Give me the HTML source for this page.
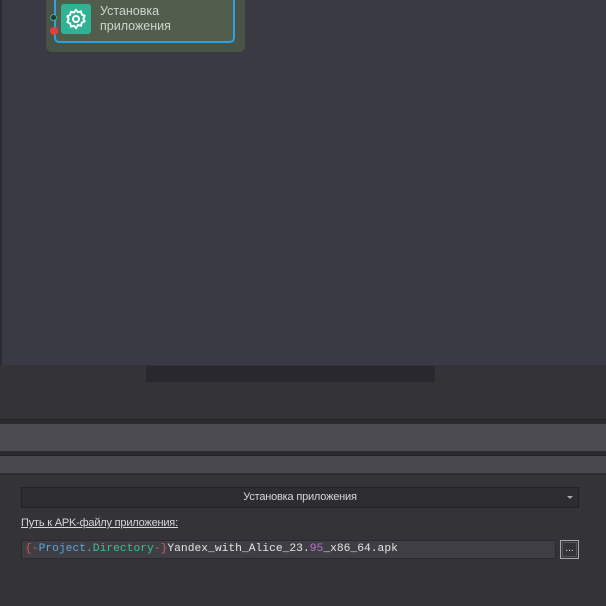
<!DOCTYPE html><html><head><style>
body{margin:0;width:606px;height:606px;overflow:hidden;background:#3a3a45;font-family:"Liberation Sans","Noto Sans CJK SC",sans-serif;position:relative}
div{position:absolute;box-sizing:border-box}
</style></head><body>
<div style="left:0;top:0;width:2px;height:606px;background:#2a2a30"></div>
<div style="left:46px;top:-10px;width:199px;height:62px;background:#4a5446;border-radius:6px"></div>
<div style="left:54px;top:-10px;width:181px;height:53px;border:2px solid #2aa3e6;border-radius:5px;background:#515e4e"></div>
<div style="left:61px;top:4px;width:30px;height:30px;background:#2fb394;border-radius:3px"></div>
<svg style="position:absolute;left:64px;top:7px" width="24" height="24" viewBox="0 0 24 24"><path d="M12 3l2 2.2 3-.7.8 3 2.8 1.4-1.2 2.8 1.2 2.6-2.8 1.4-.8 3-3-.7L12 21l-2-2.2-3 .7-.8-3-2.8-1.4L4.6 12 3.4 9.2 6.2 7.8 7 4.8l3 .7z" fill="none" stroke="#fff" stroke-width="2"/><circle cx="12" cy="12" r="3" fill="none" stroke="#fff" stroke-width="2"/></svg>
<div style="left:50px;top:14px;width:7px;height:7px;border-radius:50%;background:#1d3a2c;border:1.5px solid #2fb394"></div>
<div style="left:50px;top:27px;width:8px;height:8px;border-radius:50%;background:#e04040"></div>
<div style="left:100px;top:4px;color:#d0d4cc;font-size:12.5px;line-height:15px">Установка<br>приложения</div>
<div style="left:0;top:365px;width:606px;height:241px;background:#333338"></div>
<div style="left:146px;top:366px;width:289px;height:16px;background:#29282e"></div>
<div style="left:0;top:419px;width:606px;height:5px;background:#2a2a2f;border-top:1px solid #222226"></div>
<div style="left:0;top:424px;width:606px;height:27px;background:#4c4b51"></div>
<div style="left:0;top:451px;width:606px;height:5px;background:#2a2a2f;border-bottom:1px solid #222226"></div>
<div style="left:0;top:456px;width:606px;height:17px;background:#48474d"></div>
<div style="left:0;top:473px;width:606px;height:2px;background:#2c2c31"></div>
<div style="left:21px;top:487px;width:558px;height:21px;background:#2c2c31;border:1px solid #222226;color:#d8d8d8;font-size:11px;text-align:center;line-height:19px;letter-spacing:-0.2px">Установка приложения</div>
<div style="left:567px;top:496px;width:0;height:0;border-left:3px solid transparent;border-right:3px solid transparent;border-top:3px solid #aaa"></div>
<div style="left:21px;top:517px;color:#d8d8d8;font-size:11px;text-decoration:underline;letter-spacing:-0.2px">Путь к APK-файлу приложения:</div>
<div style="left:21px;top:540px;width:535px;height:19px;background:#3e3e44;border:1px solid #2a2a2e;font-family:'Liberation Mono',monospace;font-size:11.3px;line-height:17px;padding-left:3px;color:#e6e6e6;white-space:pre"><span style="color:#e05050">{</span><span style="color:#d06060">-</span><span style="color:#5aa8d8">Project.</span><span style="color:#3cc090">Directory</span><span style="color:#d06060">-}</span>Yandex_with_Alice_23.<span style="color:#c070d0">95</span>_x86_64.apk</div>
<div style="left:560px;top:540px;width:19px;height:19px;border:1px solid #aaa;outline:1px solid #555;outline-offset:-3px;color:#ddd;font-size:10px;text-align:center;line-height:16px">...</div>
</body></html>
